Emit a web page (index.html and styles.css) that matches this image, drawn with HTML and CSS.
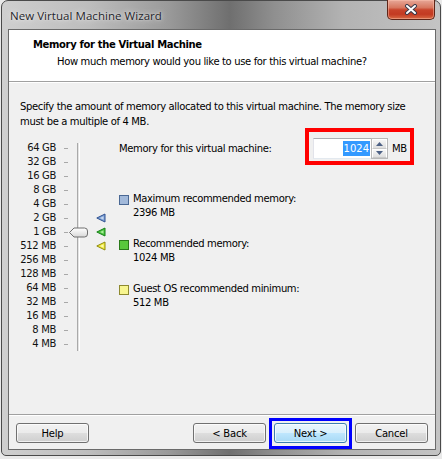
FILE: index.html
```html
<!DOCTYPE html>
<html>
<head>
<meta charset="utf-8">
<link rel="stylesheet" href="styles.css">
</head>
<body>
<div class="window">
  <div class="titlebar">
    <span class="title">New Virtual Machine Wizard</span>
    <div class="close">
      <svg width="14" height="11" viewBox="0 0 14 11">
        <path d="M3 2 L11 9 M11 2 L3 9" stroke="#3a3a4a" stroke-width="4" stroke-linecap="round"/>
        <path d="M3 2 L11 9 M11 2 L3 9" stroke="#ffffff" stroke-width="2" stroke-linecap="round"/>
      </svg>
    </div>
  </div>
  <div class="client">
    <div class="header">
      <div class="h-title">Memory for the Virtual Machine</div>
      <div class="h-sub">How much memory would you like to use for this virtual machine?</div>
    </div>
    <div class="body">
      <p class="desc">Specify the amount of memory allocated to this virtual machine. The memory size must be a multiple of 4 MB.</p>
      <div class="main">
        <div class="slider">
          <div class="track"></div>
          <span class="lbl r1">64 GB</span><span class="tick r1"></span>
          <span class="lbl r2">32 GB</span><span class="tick r2"></span>
          <span class="lbl r3">16 GB</span><span class="tick r3"></span>
          <span class="lbl r4">8 GB</span><span class="tick r4"></span>
          <span class="lbl r5">4 GB</span><span class="tick r5"></span>
          <span class="lbl r6">2 GB</span><span class="tick r6"></span>
          <span class="lbl r7">1 GB</span><span class="tick r7"></span>
          <span class="lbl r8">512 MB</span><span class="tick r8"></span>
          <span class="lbl r9">256 MB</span><span class="tick r9"></span>
          <span class="lbl r10">128 MB</span><span class="tick r10"></span>
          <span class="lbl r11">64 MB</span><span class="tick r11"></span>
          <span class="lbl r12">32 MB</span><span class="tick r12"></span>
          <span class="lbl r13">16 MB</span><span class="tick r13"></span>
          <span class="lbl r14">8 MB</span><span class="tick r14"></span>
          <span class="lbl r15">4 MB</span><span class="tick r15"></span>
          <svg class="thumb r7" width="19" height="11" viewBox="0 0 19 11">
            <defs>
              <linearGradient id="tg" x1="0" y1="0" x2="0" y2="1">
                <stop offset="0" stop-color="#ffffff"/>
                <stop offset="1" stop-color="#d8d8d8"/>
              </linearGradient>
            </defs>
            <path d="M0.5 5.5 L5 1 H15.5 Q18.5 1 18.5 4 V7 Q18.5 10 15.5 10 H5 Z" fill="url(#tg)" stroke="#6f6f6f"/>
          </svg>
          <svg class="mark r6" width="10" height="10" viewBox="0 0 10 10">
            <path d="M0.8 5 L9 1 V9 Z" fill="#7fa2d6" stroke="#2f5190" stroke-linejoin="round"/>
            <path d="M4 5 L7.5 3.3 V6.7 Z" fill="#c7d7ef"/>
          </svg>
          <svg class="mark r7" width="10" height="10" viewBox="0 0 10 10">
            <path d="M0.8 5 L9 1 V9 Z" fill="#46c23a" stroke="#18801a" stroke-linejoin="round"/>
            <path d="M4 5 L7.5 3.3 V6.7 Z" fill="#a8ec98"/>
          </svg>
          <svg class="mark r8" width="10" height="10" viewBox="0 0 10 10">
            <path d="M0.8 5 L9 1 V9 Z" fill="#f2ec3a" stroke="#8f8a10" stroke-linejoin="round"/>
            <path d="M4 5 L7.5 3.3 V6.7 Z" fill="#fbf8b0"/>
          </svg>
        </div>
        <div class="info">
          <div class="mem-row">
            <span class="mem-label">Memory for this virtual machine:</span>
            <div class="mem-input">
              <div class="textbox"><span class="sel">1024</span></div>
              <div class="spin">
                <div class="spin-btn"><svg width="7" height="4" viewBox="0 0 7 4"><path d="M0 4 L3.5 0 L7 4 Z" fill="#4d6185"/></svg></div>
                <div class="spin-btn"><svg width="7" height="4" viewBox="0 0 7 4"><path d="M0 0 L3.5 4 L7 0 Z" fill="#4d6185"/></svg></div>
              </div>
              <span class="unit">MB</span>
            </div>
          </div>
          <div class="legend">
            <div class="item">
              <span class="sq sq-blue"></span>
              <div><div>Maximum recommended memory:</div><div>2396 MB</div></div>
            </div>
            <div class="item">
              <span class="sq sq-green"></span>
              <div><div>Recommended memory:</div><div>1024 MB</div></div>
            </div>
            <div class="item">
              <span class="sq sq-yellow"></span>
              <div><div>Guest OS recommended minimum:</div><div>512 MB</div></div>
            </div>
          </div>
        </div>
      </div>
    </div>
    <div class="footer">
      <button class="btn">Help</button>
      <div class="spacer"></div>
      <button class="btn">&lt; Back</button>
      <button class="btn btn-default">Next &gt;</button>
      <button class="btn">Cancel</button>
    </div>
  </div>
</div>
</body>
</html>
```
FILE: styles.css
```css
html, body {
  margin: 0;
  padding: 0;
}
body {
  background: #e9e9e9;
  width: 442px;
  height: 459px;
  overflow: hidden;
  font-family: "DejaVu Sans", Verdana, sans-serif;
  font-size: 10px;
  letter-spacing: -0.35px;
  color: #000;
}
.window {
  box-sizing: border-box;
  width: 440px;
  height: 456px;
  margin-left: 1px;
  border: 1px solid #4a4a4a;
  border-radius: 7px 7px 5px 5px;
  background: linear-gradient(90deg, #cfcfcf 0%, #bdbdbd 20%, #9a9a9a 38%, #6f6f6f 52%, #8f8f8f 62%, #b3b3b3 78%, #c4c4c4 100%);
  padding: 0 4px 5px 6px;
  display: flex;
  flex-direction: column;
}
.titlebar {
  height: 28px;
  display: flex;
  align-items: flex-start;
  flex: none;
}
.title {
  font-family: "Open Sans", "Noto Sans", sans-serif;
  font-size: 11.5px;
  color: #1f1f2a;
  margin: 7px 0 0 2px;
  text-shadow: 0 0 6px rgba(255,255,255,0.8), 0 0 2px rgba(255,255,255,0.6);
  letter-spacing: 0.05px;
}
.close {
  margin-left: auto;
  margin-right: 1px;
  margin-top: -1px;
  width: 48px;
  height: 20px;
  box-sizing: border-box;
  border: 1px solid #5e2518;
  border-top: none;
  border-radius: 0 0 5px 5px;
  background: linear-gradient(180deg, #e7a898 0%, #d7775f 40%, #c8432a 52%, #c33a22 75%, #d86a44 100%);
  display: flex;
  align-items: center;
  justify-content: center;
  box-shadow: inset 0 0 0 1px rgba(255,200,180,0.45);
}
.client {
  flex: 1;
  border: 1px solid #6a6a6a;
  background: #f0f0f0;
  display: flex;
  flex-direction: column;
  min-height: 0;
}
.header {
  height: 52px;
  box-sizing: border-box;
  background: #fff;
  border-bottom: 1px solid #a0a0a0;
  padding: 7px 0 0 24px;
  line-height: 15px;
  flex: none;
}
.h-title {
  font-weight: bold;
}
.h-sub {
  margin-top: 2px;
  padding-left: 24px;
  color: #000;
}
.body {
  flex: 1;
  border-top: 1px solid #fff;
  padding: 16px 10px 0 11px;
  line-height: 15px;
}
.desc {
  margin: 0;
}
.main {
  display: flex;
  margin-top: 9px;
}
.slider {
  display: grid;
  grid-template-columns: 36px 13px 20px 20px;
  grid-template-rows: repeat(15, 14px);
  margin-top: 3px;
  align-items: center;
}
.lbl {
  grid-column: 1;
  text-align: right;
  line-height: 14px;
  white-space: nowrap;
  color: #111;
  justify-self: end;
}
.tick {
  grid-column: 2;
  width: 4px;
  height: 1px;
  background: #a8a8a8;
  margin-left: 8px;
}
.track {
  grid-column: 3;
  grid-row: 1 / -1;
  align-self: stretch;
  width: 3px;
  margin: 2px 0 0 8px;
  box-sizing: border-box;
  border-left: 1px solid #a9a9a9;
  border-right: 1px solid #ffffff;
  background: #e4e4e4;
}
.thumb {
  grid-column: 3;
  display: block;
  margin-left: 0;
}
.mark {
  grid-column: 4;
  display: block;
  margin-left: 7px;
}
.r1 { grid-row: 1; }
.r2 { grid-row: 2; }
.r3 { grid-row: 3; }
.r4 { grid-row: 4; }
.r5 { grid-row: 5; }
.r6 { grid-row: 6; }
.r7 { grid-row: 7; }
.r8 { grid-row: 8; }
.r9 { grid-row: 9; }
.r10 { grid-row: 10; }
.r11 { grid-row: 11; }
.r12 { grid-row: 12; }
.r13 { grid-row: 13; }
.r14 { grid-row: 14; }
.r15 { grid-row: 15; }
.info {
  margin-left: 10px;
  flex: 1;
}
.mem-row {
  display: flex;
  align-items: center;
  height: 21px;
}
.mem-label {
  width: 194px;
  flex: none;
}
.mem-input {
  position: relative;
  display: flex;
  align-items: center;
}
.mem-input::after {
  content: "";
  position: absolute;
  top: -10px;
  left: -8px;
  right: -7px;
  bottom: -6px;
  border: 4px solid #ff0000;
  pointer-events: none;
}
.textbox {
  box-sizing: border-box;
  width: 58px;
  height: 21px;
  background: #fff;
  border: 1px solid #abadb3;
  border-left-color: #e2e3ea;
  border-bottom-color: #e3e9ef;
  border-right: none;
  display: flex;
  align-items: center;
  justify-content: flex-end;
  padding-right: 1px;
}
.sel {
  background: #3399ff;
  color: #fff;
  line-height: 15px;
  padding: 0 1px;
  letter-spacing: 0;
}
.spin {
  display: flex;
  flex-direction: column;
  width: 17px;
  height: 21px;
  box-sizing: border-box;
  border: 1px solid #b8b8b8;
  background: #fff;
}
.spin-btn {
  flex: 1;
  display: flex;
  align-items: center;
  justify-content: center;
  background: linear-gradient(180deg, #f6f6f6, #dedede);
  border: 1px solid #fff;
  border-bottom-color: #c8c8c8;
}
.unit {
  margin-left: 4px;
}
.legend {
  margin-top: 33px;
  display: flex;
  flex-direction: column;
  gap: 17px;
  line-height: 14px;
}
.item {
  display: flex;
  align-items: flex-start;
}
.sq {
  width: 10px;
  height: 10px;
  box-sizing: border-box;
  margin: 3px 4px 0 0;
  flex: none;
}
.sq-blue {
  background: #a2b9da;
  border: 1px solid #4a6894;
}
.sq-green {
  background: #58c83c;
  border: 1px solid #2a7a1a;
}
.sq-yellow {
  background: #f8f690;
  border: 1px solid #8e8a30;
}
.footer {
  flex: none;
  border-top: 1px solid #a0a0a0;
  box-shadow: inset 0 1px 0 #fff;
  display: flex;
  gap: 8px;
  padding: 8px 7px 6px 7px;
}
.spacer {
  flex: 1;
}
.btn {
  position: relative;
  width: 73px;
  height: 20px;
  box-sizing: border-box;
  border: 1px solid #707070;
  border-radius: 3px;
  background: linear-gradient(180deg, #f2f2f2 0%, #ebebeb 48%, #dddddd 52%, #cfcfcf 100%);
  font-family: "DejaVu Sans", Verdana, sans-serif;
  font-size: 10px;
  letter-spacing: -0.2px;
  color: #000;
  padding: 0;
  box-shadow: inset 0 0 0 1px rgba(255,255,255,0.7);
}
.btn-default {
  border-color: #3c7fb1;
  background: linear-gradient(180deg, #eaf6fd 0%, #d9f0fc 48%, #bee6fd 52%, #a7d9f5 100%);
}
.btn-default::after {
  content: "";
  position: absolute;
  top: -6px;
  left: -6px;
  right: -6px;
  bottom: -7px;
  border: 3px solid #0000ff;
  pointer-events: none;
}
```
